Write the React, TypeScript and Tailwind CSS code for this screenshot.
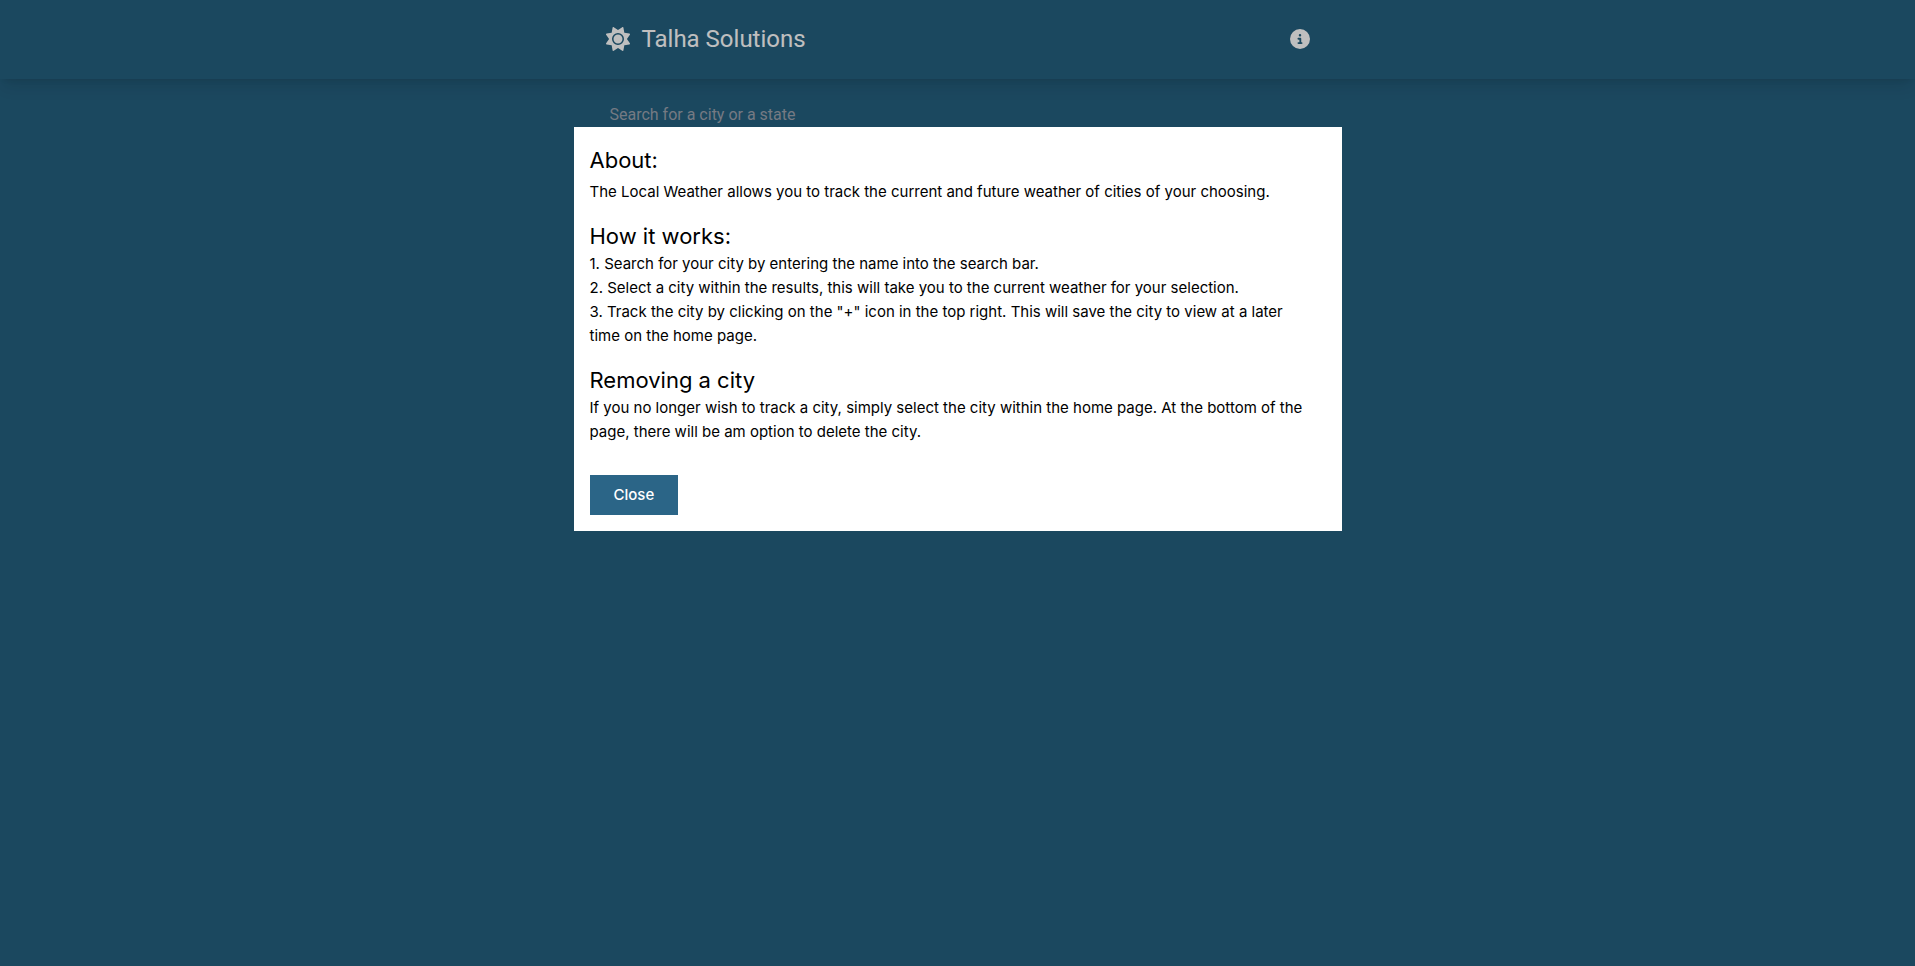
import { useState } from "react";
import { FaCircleInfo, FaSun } from "react-icons/fa6";

const steps = [
  "1. Search for your city by entering the name into the search bar.",
  "2. Select a city within the results, this will take you to the current weather for your selection.",
  '3. Track the city by clicking on the "+" icon in the top right. This will save the city to view at a later time on the home page.',
];

function SiteHeader({ onInfo }: { onInfo: () => void }) {
  return (
    <header className="bg-[#25607f] shadow-lg">
      <nav className="mx-auto flex max-w-3xl items-center justify-between px-8 pt-[23px] pb-6 text-white">
        <a href="#" className="flex items-center gap-3">
          <FaSun className="size-6" aria-hidden="true" />
          <span className="text-2xl">Talha Solutions</span>
        </a>
        <button type="button" aria-label="About this app" onClick={onInfo}>
          <FaCircleInfo className="size-5" aria-hidden="true" />
        </button>
      </nav>
    </header>
  );
}

function AboutModal({ onClose }: { onClose: () => void }) {
  return (
    <div className="fixed inset-0 flex items-start justify-center bg-black/25 pt-[127px]">
      <div
        role="dialog"
        aria-modal="true"
        aria-label="About"
        className="w-full max-w-3xl bg-white px-4 pt-[17px] pb-4 font-['Inter',sans-serif] text-[15px] leading-6 text-black"
      >
        <h1 className="mb-1 text-[22px] leading-8">About:</h1>
        <p className="mb-4">
          The Local Weather allows you to track the current and future weather of cities of your choosing.
        </p>
        <h2 className="text-[22px] leading-8">How it works:</h2>
        <ol className="mb-4 pr-4">
          {steps.map((step) => (
            <li key={step}>{step}</li>
          ))}
        </ol>
        <h2 className="text-[22px] leading-8">Removing a city</h2>
        <p>
          If you no longer wish to track a city, simply select the city within the home page. At the bottom of the
          page, there will be am option to delete the city.
        </p>
        <button
          type="button"
          onClick={onClose}
          className="mt-[31px] block bg-[#2b6587] px-6 py-2 font-medium text-white"
        >
          Close
        </button>
      </div>
    </div>
  );
}

export default function App() {
  const [open, setOpen] = useState(true);
  return (
    <div className="min-h-screen bg-[#25607f] font-['Roboto',sans-serif]">
      <SiteHeader onInfo={() => setOpen(true)} />
      <main className="mx-auto max-w-3xl px-8 pt-4 text-white">
        <input
          type="text"
          aria-label="Search for a city or a state"
          placeholder="Search for a city or a state"
          className="w-full border-b border-white bg-transparent px-1 py-2 placeholder:text-[#9ca3af] focus:outline-none"
        />
      </main>
      {open && <AboutModal onClose={() => setOpen(false)} />}
    </div>
  );
}
